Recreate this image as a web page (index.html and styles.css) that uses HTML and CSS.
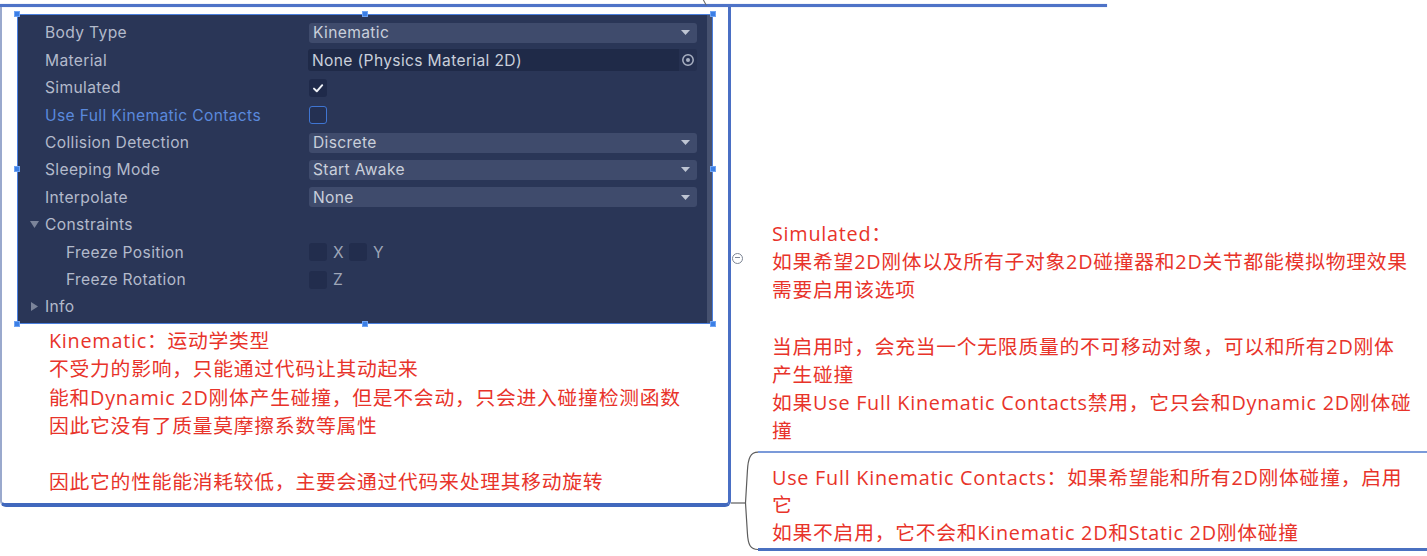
FILE: index.html
```html
<!DOCTYPE html>
<html lang="zh-CN">
<head>
<meta charset="utf-8">
<title>Rigidbody 2D - Kinematic</title>
<link rel="stylesheet" href="styles.css">
</head>
<body>
<div class="canvas">
  <span class="stub"></span>
  <div class="top-rule"></div>
  <div class="stage">
    <section class="node-main">
      <div class="shot">
        <div class="inspector">
          <div class="row">
            <span class="label">Body Type</span>
            <div class="dropdown"><span>Kinematic</span><svg class="arrow" viewBox="0 0 9 5"><polygon points="0,0 9,0 4.5,5"/></svg></div>
          </div>
          <div class="row">
            <span class="label">Material</span>
            <div class="objfield"><span class="objtext">None (Physics Material 2D)</span><span class="picker"><svg viewBox="0 0 14 14"><circle cx="7" cy="7" r="5.2" class="ring"/><circle cx="7" cy="7" r="2" class="dot"/></svg></span></div>
          </div>
          <div class="row">
            <span class="label">Simulated</span>
            <span class="check"><svg viewBox="0 0 18 18"><path d="M5 9.6 L7.8 12.3 L13.2 6.2"/></svg></span>
          </div>
          <div class="row">
            <span class="label label-blue">Use Full Kinematic Contacts</span>
            <span class="check check-focus"></span>
          </div>
          <div class="row">
            <span class="label">Collision Detection</span>
            <div class="dropdown"><span>Discrete</span><svg class="arrow" viewBox="0 0 9 5"><polygon points="0,0 9,0 4.5,5"/></svg></div>
          </div>
          <div class="row">
            <span class="label">Sleeping Mode</span>
            <div class="dropdown"><span>Start Awake</span><svg class="arrow" viewBox="0 0 9 5"><polygon points="0,0 9,0 4.5,5"/></svg></div>
          </div>
          <div class="row">
            <span class="label">Interpolate</span>
            <div class="dropdown"><span>None</span><svg class="arrow" viewBox="0 0 9 5"><polygon points="0,0 9,0 4.5,5"/></svg></div>
          </div>
          <div class="row">
            <span class="label label-fold"><svg class="fold" viewBox="0 0 9 9"><polygon points="0,1 9,1 4.5,8"/></svg>Constraints</span>
          </div>
          <div class="row">
            <span class="label label-sub">Freeze Position</span>
            <div class="axes"><span class="check check-dim"></span><span class="axis">X</span><span class="check check-dim"></span><span class="axis">Y</span></div>
          </div>
          <div class="row">
            <span class="label label-sub">Freeze Rotation</span>
            <div class="axes"><span class="check check-dim"></span><span class="axis">Z</span></div>
          </div>
          <div class="row">
            <span class="label label-fold"><svg class="fold" viewBox="0 0 9 9"><polygon points="1,0 8,4.5 1,9"/></svg>Info</span>
          </div>
        </div>
        <span class="handle h-tl"></span><span class="handle h-tc"></span><span class="handle h-tr"></span>
        <span class="handle h-ml"></span><span class="handle h-mr"></span>
        <span class="handle h-bl"></span><span class="handle h-bc"></span><span class="handle h-br"></span>
      </div>
      <div class="note note-main">
        <p>Kinematic：运动学类型</p>
        <p>不受力的影响，只能通过代码让其动起来</p>
        <p>能和Dynamic 2D刚体产生碰撞，但是不会动，只会进入碰撞检测函数</p>
        <p>因此它没有了质量莫摩擦系数等属性</p>
        <p>&nbsp;</p>
        <p>因此它的性能能消耗较低，主要会通过代码来处理其移动旋转</p>
      </div>
    </section>
    <section class="side">
      <span class="collapse"></span>
      <div class="note note-sim">
        <p>Simulated：</p>
        <p>如果希望2D刚体以及所有子对象2D碰撞器和2D关节都能模拟物理效果</p>
        <p>需要启用该选项</p>
        <p>&nbsp;</p>
        <p>当启用时，会充当一个无限质量的不可移动对象，可以和所有2D刚体</p>
        <p>产生碰撞</p>
        <p>如果Use Full Kinematic Contacts禁用，它只会和Dynamic 2D刚体碰</p>
        <p>撞</p>
      </div>
      <div class="node-ufkc">
        <svg class="bracket" viewBox="0 0 27 100"><path d="M0 52 H14.5"/><path d="M27 1.2 C19.5 1.2 17 7 16.4 20 L14.5 52 L16.4 82 C17 94 19.5 98.5 27 98.5"/></svg>
        <div class="ufkc-body">
          <div class="note note-ufkc">
            <p>Use Full Kinematic Contacts：如果希望能和所有2D刚体碰撞，启用</p>
            <p>它</p>
            <p>如果不启用，它不会和Kinematic 2D和Static 2D刚体碰撞</p>
          </div>
          <div class="ufkc-rule"></div>
        </div>
      </div>
    </section>
  </div>
</div>
</body>
</html>
```

FILE: styles.css
```css
html, body {
  margin: 0;
  padding: 0;
  background: #ffffff;
}

.canvas {
  position: relative;
  width: 1427px;
  height: 556px;
  overflow: hidden;
  background: #ffffff;
}

.stub {
  position: absolute;
  left: 704px;
  top: -2px;
  width: 1px;
  height: 8px;
  background: #6a6a6a;
  transform: rotate(-28deg);
}

.top-rule {
  margin-top: 4px;
  width: 1107px;
  height: 3px;
  background: #4e73c7;
  box-shadow: 0 0 1px rgba(78, 115, 199, 0.7);
}

.stage {
  display: flex;
  align-items: flex-start;
}

/* ---------- main node ---------- */
.node-main {
  width: 731px;
  height: 500px;
  box-sizing: border-box;
  border-left: 2px solid #9aa9cd;
  border-right: 3px solid #4a6fc4;
  border-bottom: 4px solid #4168bd;
  border-radius: 0 0 6px 6px;
  padding: 7px 0 0 15px;
}

.shot {
  position: relative;
  width: 696px;
  height: 310px;
  box-sizing: border-box;
  border: 1px solid #4a7fdd;
}

.inspector {
  height: 100%;
  box-sizing: border-box;
  padding-top: 4.3px;
  background: linear-gradient(to right, #2a3657 689px, #46516f 689px, #46516f 694px, #2a3657 694px);
  font-family: Inter, "Noto Sans", sans-serif;
  font-size: 15.6px;
  letter-spacing: 0.35px;
}

.row {
  display: grid;
  grid-template-columns: 291px 388px;
  align-items: center;
  height: 27.4px;
}

.label {
  padding-left: 27px;
  color: #b3bacb;
  white-space: nowrap;
}

.label-blue {
  color: #5a89dc;
}

.label-sub {
  padding-left: 48px;
}

.label-fold {
  display: flex;
  align-items: center;
  padding-left: 12px;
}

.fold {
  width: 9px;
  height: 9px;
  margin-right: 6px;
  fill: #7b849a;
}

.dropdown {
  display: flex;
  align-items: center;
  justify-content: space-between;
  height: 20px;
  padding: 0 7px 0 4px;
  background: #3f4b6c;
  border-radius: 3px;
  color: #c9cfdb;
}

.arrow {
  width: 9px;
  height: 5px;
  fill: #bec5d3;
}

.objfield {
  display: flex;
  height: 22px;
  margin-left: -1px;
}

.objtext {
  flex: 1;
  display: flex;
  align-items: center;
  padding-left: 4px;
  background: #1f2a48;
  border-radius: 3px 0 0 3px;
  color: #c9cfdb;
}

.picker {
  display: flex;
  align-items: center;
  justify-content: center;
  width: 18px;
  background: #253050;
  border-radius: 0 3px 3px 0;
}

.picker svg {
  width: 14px;
  height: 14px;
}

.ring {
  fill: none;
  stroke: #a9b1c3;
  stroke-width: 1.5;
}

.dot {
  fill: #a9b1c3;
}

.check {
  display: block;
  width: 18px;
  height: 18px;
  box-sizing: border-box;
  background: #1f2a4a;
  border-radius: 3px;
}

.check svg {
  width: 18px;
  height: 18px;
  fill: none;
  stroke: #eef1f6;
  stroke-width: 2;
  stroke-linecap: round;
  stroke-linejoin: round;
}

.check-focus {
  background: #243052;
  border: 1.5px solid #3f75d2;
}

.check-dim {
  background: #222d4d;
}

.axes {
  display: flex;
  align-items: center;
}

.axis {
  margin: 0 5px 0 6px;
  color: #9ea6b8;
}

.handle {
  position: absolute;
  width: 6px;
  height: 6px;
  background: #3b7fe6;
  border: 1px solid #6fa3f3;
  box-sizing: border-box;
}

.h-tl { left: -4px; top: -4px; }
.h-tc { left: 344px; top: -4px; }
.h-tr { right: -4px; top: -4px; }
.h-ml { left: -4px; top: 151px; }
.h-mr { right: -4px; top: 151px; }
.h-bl { left: -4px; bottom: -4px; }
.h-bc { left: 344px; bottom: -4px; }
.h-br { right: -4px; bottom: -4px; }

/* ---------- notes ---------- */
.note {
  font-family: "Open Sans", "Noto Sans CJK SC", sans-serif;
  font-size: 19.8px;
  letter-spacing: 0.75px;
  color: #e8332a;
  white-space: nowrap;
}

.note p {
  margin: 0;
}

.note-main {
  margin-top: 3px;
  padding-left: 32px;
}

.note-main p {
  line-height: 28.3px;
}

/* ---------- right side ---------- */
.side {
  position: relative;
  flex: 1;
}

.collapse {
  position: absolute;
  left: 0.5px;
  top: 245.5px;
  width: 11px;
  height: 11px;
  box-sizing: border-box;
  border: 1.3px solid #7d8594;
  border-radius: 50%;
  background: #ffffff;
}

.collapse::after {
  content: "";
  position: absolute;
  left: 2px;
  right: 2px;
  top: 3.6px;
  height: 1px;
  background: #7d8594;
}

.note-sim {
  margin: 213px 0 0 41px;
}

.note-sim p {
  line-height: 28.2px;
}

.node-ufkc {
  display: flex;
  height: 100px;
  margin-top: 5.5px;
}

.bracket {
  width: 27px;
  height: 100px;
  flex: none;
  fill: none;
  stroke: #5c5c5c;
  stroke-width: 1.2;
}

.ufkc-body {
  flex: 1;
  display: flex;
  flex-direction: column;
  border-top: 2px solid #7b9ad9;
}

.note-ufkc {
  flex: 1;
  padding: 10.5px 0 0 14px;
}

.note-ufkc p {
  line-height: 27.5px;
}

.ufkc-rule {
  flex: none;
  height: 3px;
  background: #4a70c0;
}
```
